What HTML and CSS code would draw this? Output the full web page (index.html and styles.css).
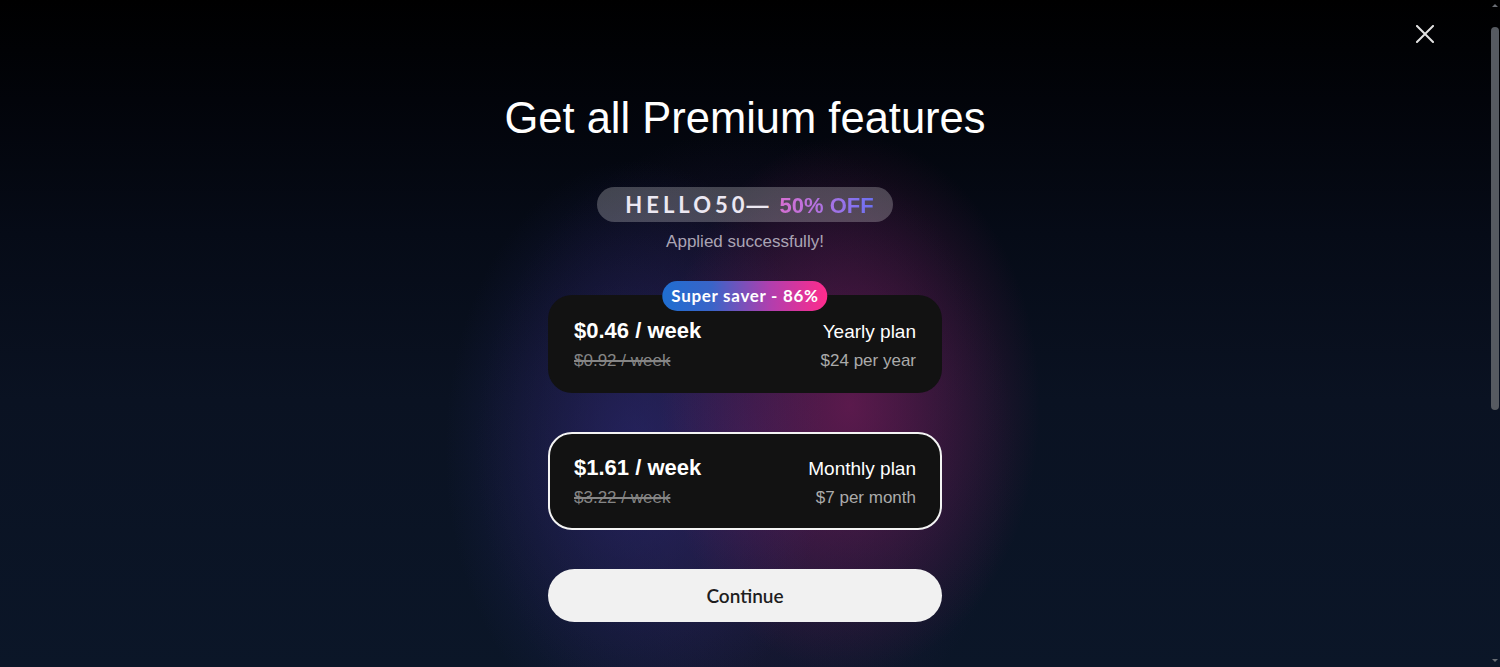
FILE: index.html
```html
<!DOCTYPE html>
<html lang="en">
<head>
<meta charset="utf-8">
<title>Get all Premium features</title>
<link rel="stylesheet" href="styles.css">
</head>
<body>
<div class="page">
  <div class="view">
    <button class="close" aria-label="Close">
      <svg viewBox="0 0 18 18" width="18" height="18"><path d="M1 1 L17 17 M17 1 L1 17" stroke="#e2e2e2" stroke-width="2" stroke-linecap="square" fill="none"/></svg>
    </button>
    <main class="paywall">
      <h1 class="title">Get all Premium features</h1>
      <div class="coupon">
        <span class="code">HELLO50<span class="dash">—</span></span>
        <span class="off">50% OFF</span>
      </div>
      <p class="applied">Applied successfully!</p>
      <div class="plans">
        <div class="plan">
          <span class="badge">Super saver - 86%</span>
          <div class="plan-grid">
            <span class="price">$0.46 / week</span>
            <span class="name">Yearly plan</span>
            <span class="old">$0.92 / week</span>
            <span class="total">$24 per year</span>
          </div>
        </div>
        <div class="plan selected">
          <div class="plan-grid">
            <span class="price">$1.61 / week</span>
            <span class="name">Monthly plan</span>
            <span class="old">$3.22 / week</span>
            <span class="total">$7 per month</span>
          </div>
        </div>
      </div>
      <button class="continue">Continue</button>
    </main>
  </div>
  <div class="scrollbar" aria-hidden="true">
    <span class="arrow up"></span>
    <span class="thumb"></span>
    <span class="arrow down"></span>
  </div>
</div>
</body>
</html>
```
FILE: styles.css
```css
html, body {
  margin: 0;
  height: 100%;
}

body {
  font-family: "Liberation Sans", Arial, sans-serif;
  color: #ffffff;
  overflow: hidden;
}

.page {
  height: 667px;
  display: flex;
  background-color: #0b1527;
  background-image:
    radial-gradient(ellipse 190px 270px at 850px 405px, rgba(130, 28, 92, 0.62), rgba(130, 28, 92, 0) 100%),
    radial-gradient(ellipse 190px 290px at 635px 450px, rgba(45, 45, 128, 0.52), rgba(45, 45, 128, 0) 100%),
    radial-gradient(ellipse 270px 320px at 745px 450px, rgba(64, 30, 90, 0.52), rgba(64, 30, 90, 0) 100%),
    linear-gradient(180deg, #000000 0%, #02040a 15%, #060b17 35%, #0a1222 60%, #0b1628 100%);
  background-repeat: no-repeat;
}

.view {
  position: relative;
  flex: 1;
}

.scrollbar {
  width: 10px;
  display: flex;
  flex-direction: column;
  align-items: center;
}

.thumb {
  width: 8px;
  height: 383px;
  margin-top: 20px;
  border-radius: 4px;
  background: #565a61;
}

.arrow {
  width: 0;
  height: 0;
  border-left: 3px solid transparent;
  border-right: 3px solid transparent;
}

.arrow.up {
  margin-top: 4px;
  border-bottom: 3px solid #6a6e75;
}

.arrow.down {
  margin-top: auto;
  margin-bottom: 5px;
  border-top: 3px solid #6a6e75;
}

.close {
  position: absolute;
  top: 25px;
  right: 56px;
  width: 18px;
  height: 18px;
  padding: 0;
  border: 0;
  background: none;
  display: flex;
  cursor: pointer;
}

.paywall {
  display: flex;
  flex-direction: column;
  align-items: center;
  padding-top: 92px;
}

.title {
  margin: 0;
  font-size: 43.5px;
  line-height: 52px;
  font-weight: 400;
  color: #ffffff;
}

.coupon {
  margin-top: 43px;
  height: 35px;
  box-sizing: border-box;
  padding: 0 19px 0 28px;
  border-radius: 18px;
  background: rgba(255, 255, 255, 0.24);
  display: flex;
  align-items: baseline;
  gap: 11px;
  line-height: 35px;
}

.code {
  font-family: Lato, "Liberation Sans", sans-serif;
  font-weight: 700;
  font-size: 22px;
  letter-spacing: 4px;
  color: #ece8f2;
}

.dash {
  font-family: "Liberation Sans", Arial, sans-serif;
  font-weight: 700;
  letter-spacing: 0;
  margin-left: -2px;
}

.off {
  font-family: "Liberation Sans", Arial, sans-serif;
  font-weight: 700;
  font-size: 22px;
  background: linear-gradient(90deg, #d56fd2 0%, #a673e6 55%, #6a70f2 100%);
  -webkit-background-clip: text;
  background-clip: text;
  color: transparent;
}

.applied {
  margin: 10px 0 0;
  font-size: 17px;
  line-height: 20px;
  color: #aaa4b4;
}

.plans {
  margin-top: 43px;
  display: flex;
  flex-direction: column;
  gap: 39px;
}

.plan {
  position: relative;
  width: 394px;
  height: 98px;
  box-sizing: border-box;
  border: 2px solid transparent;
  border-radius: 24px;
  background: #121212;
  padding: 0 24px;
  display: flex;
  flex-direction: column;
  justify-content: center;
}

.plan.selected {
  border-color: #f4f4f4;
}

.badge {
  position: absolute;
  top: -16px;
  left: 50%;
  transform: translateX(-50%);
  height: 30px;
  padding: 0 9px;
  border-radius: 15px;
  background: linear-gradient(90deg, #1f6ed1 0%, #3a64c8 30%, #b03fae 65%, #ff2b8c 100%);
  font-family: Lato, "Liberation Sans", sans-serif;
  font-weight: 700;
  font-size: 17px;
  letter-spacing: 0.7px;
  line-height: 30px;
  white-space: nowrap;
  color: #ffffff;
}

.plan-grid {
  display: grid;
  grid-template-columns: 1fr auto;
  align-items: baseline;
  row-gap: 6px;
}

.price {
  font-size: 22px;
  line-height: 26px;
  font-weight: 700;
  color: #ffffff;
}

.name {
  font-size: 19px;
  line-height: 26px;
  color: #ffffff;
  text-align: right;
}

.old {
  font-size: 17px;
  line-height: 20px;
  color: #858585;
  text-decoration: line-through;
  text-decoration-thickness: 1.5px;
}

.total {
  font-size: 17px;
  line-height: 20px;
  color: #ababab;
  text-align: right;
}

.continue {
  margin-top: 39px;
  width: 394px;
  height: 53px;
  border: 0;
  border-radius: 27px;
  background: #f1f1f1;
  color: #1e1e1e;
  font-family: Lato, "Liberation Sans", sans-serif;
  font-weight: 600;
  font-size: 19px;
  cursor: pointer;
}
```
